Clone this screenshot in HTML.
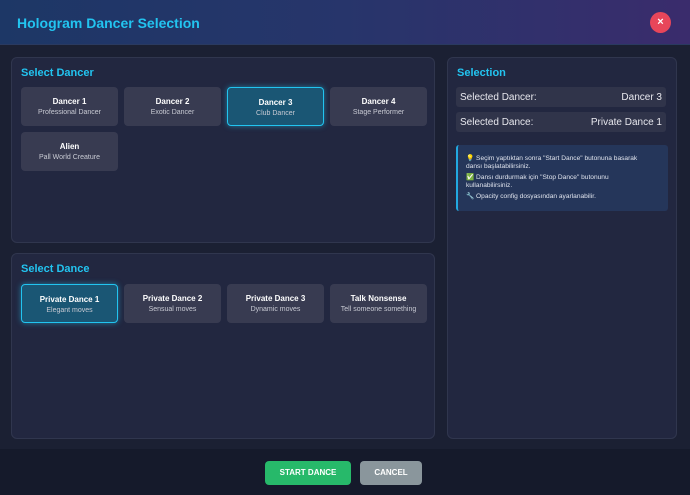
<!DOCTYPE html><html><head><style>
*{box-sizing:border-box;margin:0;padding:0}
body{width:690px;height:495px;background:#1b2033;font-family:"Liberation Sans",sans-serif;position:relative;overflow:hidden;color:#fff}
.hdr{position:absolute;left:0;top:0;width:690px;height:45px;background:linear-gradient(90deg,#1d3766,#27356b 50%,#3a2c6c);border-bottom:1px solid #2a3a60}
.hdr h1{position:absolute;left:17px;top:15px;font-size:14px;font-weight:bold;color:#22c4f0}
.close{position:absolute;left:650px;top:12px;width:21px;height:21px;border-radius:50%;background:#e8465a;color:#fff;font-size:11px;font-weight:bold;text-align:center;line-height:21px}
.panel{position:absolute;background:#222740;border:1px solid #30364e;border-radius:6px}
.title{position:absolute;left:9px;top:9px;font-size:11px;font-weight:bold;color:#22c4f0}
.card{position:absolute;width:97px;height:39px;background:#383b51;border-radius:4px;text-align:center;padding-top:10px}
.card b{display:block;font-size:8px;color:#fff}
.card span{display:block;font-size:7px;color:#c8cad3;margin-top:3px}
.sel{background:#1a5674;border:1.5px solid #22c4f0;box-shadow:0 0 6px #22c4f088}
.row{position:absolute;left:8px;width:210px;height:20px;background:#30344a;border-radius:3px;font-size:10px;color:#e8e8ee;padding:5px 4px}
.row i{font-style:normal;float:right}
.info{position:absolute;left:8px;top:87px;width:212px;height:66px;background:#25365a;border-left:2px solid #22a8e0;border-radius:3px;font-size:6.6px;color:#e0e4ee;padding:10px 14px 8px 8px;line-height:8px}
.info p{margin-bottom:3px}
.ftr{position:absolute;left:0;top:449px;width:690px;height:46px;background:#151a2b}
.btn{position:absolute;top:12px;height:24px;border-radius:4px;font-size:8px;font-weight:bold;text-align:center;line-height:24px;color:#fff}
</style></head><body>
<div class="hdr"><h1>Hologram Dancer Selection</h1><div class="close">×</div></div>
<div class="panel" style="left:11px;top:57px;width:424px;height:186px">
<div class="title">Select Dancer</div>
<div class="card" style="left:9px;top:29px"><b>Dancer 1</b><span>Professional Dancer</span></div>
<div class="card" style="left:112px;top:29px"><b>Dancer 2</b><span>Exotic Dancer</span></div>
<div class="card sel" style="left:215px;top:29px"><b>Dancer 3</b><span>Club Dancer</span></div>
<div class="card" style="left:318px;top:29px"><b>Dancer 4</b><span>Stage Performer</span></div>
<div class="card" style="left:9px;top:74px"><b>Alien</b><span>Pall World Creature</span></div>
</div>
<div class="panel" style="left:11px;top:253px;width:424px;height:186px">
<div class="title">Select Dance</div>
<div class="card sel" style="left:9px;top:30px"><b>Private Dance 1</b><span>Elegant moves</span></div>
<div class="card" style="left:112px;top:30px"><b>Private Dance 2</b><span>Sensual moves</span></div>
<div class="card" style="left:215px;top:30px"><b>Private Dance 3</b><span>Dynamic moves</span></div>
<div class="card" style="left:318px;top:30px"><b>Talk Nonsense</b><span>Tell someone something</span></div>
</div>
<div class="panel" style="left:447px;top:57px;width:230px;height:382px">
<div class="title">Selection</div>
<div class="row" style="top:29px">Selected Dancer:<i>Dancer 3</i></div>
<div class="row" style="top:54px">Selected Dance:<i>Private Dance 1</i></div>
<div class="info"><p>💡 Seçim yaptıktan sonra "Start Dance" butonuna basarak dansı başlatabilirsiniz.</p><p>✅ Dansı durdurmak için "Stop Dance" butonunu kullanabilirsiniz.</p><p>🔧 Opacity config dosyasından ayarlanabilir.</p></div>
</div>
<div class="ftr">
<div class="btn" style="left:265px;width:86px;background:#27b96a">START DANCE</div>
<div class="btn" style="left:360px;width:62px;background:#8a969c">CANCEL</div>
</div>
</body></html>
